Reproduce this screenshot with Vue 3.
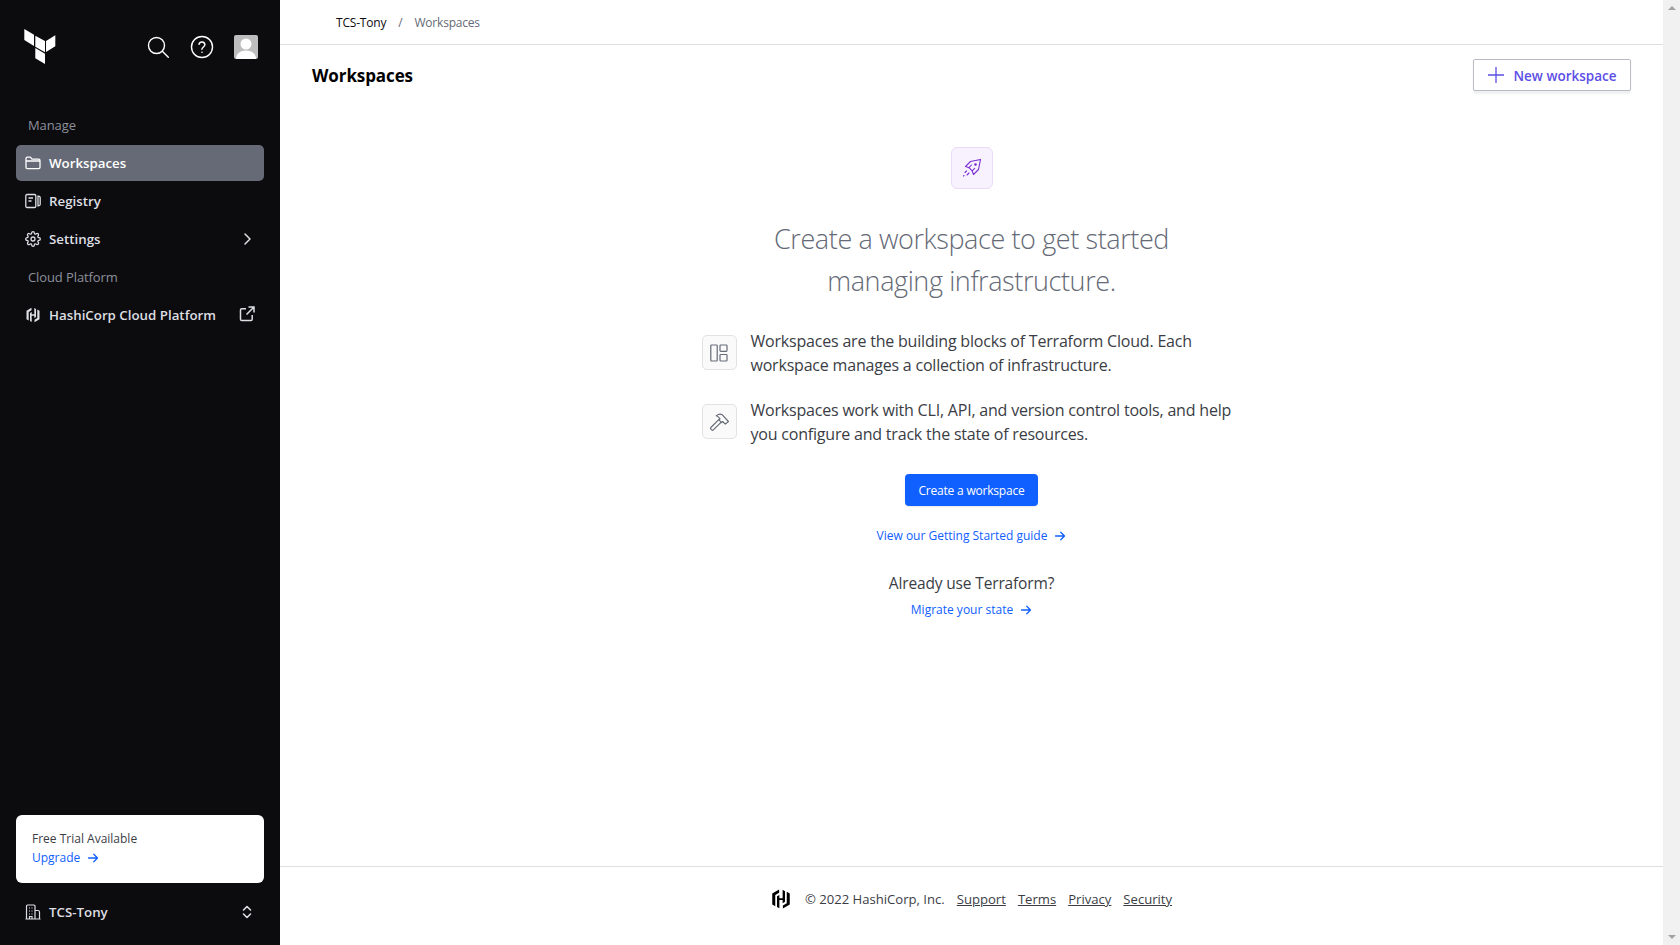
<template>
  <div class="app">
    <aside class="sidebar">
      <div class="side-top">
        <svg class="logo" viewBox="0 0 32 36" width="32" height="36">
          <polygon points="0.3,1 10,6.7 10,18 0.3,12" fill="#fff" />
          <polygon points="11.3,7.7 21,13 21,24.3 11.3,18.7" fill="#fff" />
          <polygon points="22,13 31.3,7.3 31.3,18.3 22,24" fill="#fff" />
          <polygon points="11.3,20 21,25.7 21,36 11.3,30.3" fill="#fff" />
        </svg>
        <div class="top-actions">
          <svg viewBox="0 0 24 24" width="24" height="24" fill="none" stroke="#fff" stroke-width="1.4">
            <circle cx="10.5" cy="10.5" r="8" />
            <path d="M16.3 16.3l6 6" stroke-linecap="round" />
          </svg>
          <svg viewBox="0 0 24 24" width="24" height="24" fill="none" stroke="#fff" stroke-width="1.4">
            <circle cx="12" cy="12" r="10.5" />
            <path d="M9 9.2a3 3 0 0 1 5.9.6c0 2-3 2.4-3 4.4" stroke-linecap="round" />
            <circle cx="12" cy="17.3" r=".8" fill="#fff" stroke="none" />
          </svg>
          <div class="avatar">
            <svg viewBox="0 0 24 24" width="24" height="24">
              <circle cx="12" cy="9" r="5.500" fill="#fff" />
              <path d="M2 24c0-5 4-8.500 10-8.500s10 3.500 10 8.500z" fill="#fff" />
            </svg>
          </div>
        </div>
      </div>

      <nav class="nav">
        <div class="nav-label">Manage</div>
        <a class="nav-item active">
          <svg viewBox="0 0 16 16" width="16" height="16" fill="none" stroke="currentColor" stroke-width="1.3">
            <path d="M1 3.6c0-.9.6-1.4 1.4-1.4h3l1.6 1.9h6.6c.8 0 1.4.6 1.4 1.4v6.700c0 .8-.6 1.400-1.400 1.400H2.400c-.8 0-1.400-.6-1.400-1.400zM1 6h14" stroke-linejoin="round" />
          </svg>
          <span>Workspaces</span>
        </a>
        <a class="nav-item">
          <svg viewBox="0 0 16 16" width="16" height="16" fill="none" stroke="currentColor" stroke-width="1.3">
            <rect x=".8" y="1.500" width="10" height="13" rx="1.200" />
            <path d="M3.500 5h4.500M3.500 8h3M13 3.200h.5c.8 0 1.700.6 1.700 1.500v6.600c0 .9-.9 1.500-1.700 1.500H13z" />
          </svg>
          <span>Registry</span>
        </a>
        <a class="nav-item">
          <svg viewBox="0 0 24 24" width="16" height="16" fill="none" stroke="currentColor" stroke-width="1.900">
            <circle cx="12" cy="12" r="3" />
            <path d="M19.4 15a1.65 1.65 0 0 0 .33 1.82l.06.06a2 2 0 0 1 0 2.83 2 2 0 0 1-2.83 0l-.06-.06a1.65 1.65 0 0 0-1.82-.33 1.65 1.65 0 0 0-1 1.51V21a2 2 0 0 1-2 2 2 2 0 0 1-2-2v-.09A1.65 1.65 0 0 0 9 19.4a1.65 1.65 0 0 0-1.82.33l-.06.06a2 2 0 0 1-2.83 0 2 2 0 0 1 0-2.83l.06-.06a1.65 1.65 0 0 0 .33-1.82 1.65 1.65 0 0 0-1.51-1H3a2 2 0 0 1-2-2 2 2 0 0 1 2-2h.09A1.65 1.65 0 0 0 4.6 9a1.65 1.65 0 0 0-.33-1.82l-.06-.06a2 2 0 0 1 0-2.83 2 2 0 0 1 2.83 0l.06.06a1.65 1.65 0 0 0 1.82.33H9a1.65 1.65 0 0 0 1-1.51V3a2 2 0 0 1 2-2 2 2 0 0 1 2 2v.09a1.65 1.65 0 0 0 1 1.51 1.65 1.65 0 0 0 1.82-.33l.06-.06a2 2 0 0 1 2.83 0 2 2 0 0 1 0 2.83l-.06.06a1.65 1.65 0 0 0-.33 1.82V9a1.65 1.65 0 0 0 1.51 1H21a2 2 0 0 1 2 2 2 2 0 0 1-2 2h-.09a1.65 1.65 0 0 0-1.51 1z" />
          </svg>
          <span>Settings</span>
          <svg class="item-end" viewBox="0 0 16 16" width="16" height="16" fill="none" stroke="currentColor" stroke-width="1.500">
            <path d="M6 3l5 5-5 5" stroke-linecap="round" stroke-linejoin="round" />
          </svg>
        </a>
        <div class="nav-label">Cloud Platform</div>
        <a class="nav-item">
          <svg viewBox="0 0 16 16" width="16" height="16" fill="currentColor">
            <path d="M6.500.8L1.500 3.700v8.600l2.200 1.300V4.900l2.800-1.600z" />
            <path d="M9.500 15.200l5-2.900V3.700l-2.200-1.300v8.700l-2.800 1.600z" />
            <path d="M5 6l1.700-1V7.200h2.600V1l1.700 1v8l-1.700 1V8.800H6.700V15L5 14z" />
          </svg>
          <span>HashiCorp Cloud Platform</span>
          <svg class="item-end ext" viewBox="0 0 16 16" width="16" height="16" fill="none" stroke="currentColor" stroke-width="1.500">
            <path d="M7 2.800H2.800c-.8 0-1.300.5-1.300 1.300v9.100c0 .8.500 1.300 1.300 1.300h9.100c.8 0 1.300-.5 1.300-1.300V9M9.500 1H15v5.500M15 1L7.500 8.500" />
          </svg>
        </a>
      </nav>

      <div class="trial">
        <div class="trial-title">Free Trial Available</div>
        <a class="link trial-link">Upgrade
          <svg viewBox="0 0 16 16" width="12" height="12" fill="none" stroke="currentColor" stroke-width="1.700"><path d="M2 8h12M9 3l5 5-5 5" stroke-linecap="round" stroke-linejoin="round" /></svg>
        </a>
      </div>

      <div class="org">
        <svg viewBox="0 0 16 16" width="16" height="16" fill="none" stroke="currentColor" stroke-width="1.200">
          <path d="M1.500 15V2c0-.6.400-1 1-1h6.500c.6 0 1 .4 1 1v13zM10 6.500h3c1 0 1.500.6 1.500 1.500v7H10M.5 15h15" />
          <path d="M4 4h1M6.500 4h1M4 7h1M6.500 7h1M4 10h1M6.500 10h1M4.500 15v-2.500h2.500V15" />
        </svg>
        <span>TCS-Tony</span>
        <svg class="item-end" viewBox="0 0 16 16" width="16" height="16" fill="none" stroke="currentColor" stroke-width="1.600">
          <path d="M4.500 6L8 2.500 11.500 6M4.500 10L8 13.500 11.500 10" stroke-linecap="round" stroke-linejoin="round" />
        </svg>
      </div>
    </aside>

    <main class="main">
      <div class="crumbs">
        <span class="crumb-org">TCS-Tony</span>
        <span class="crumb-sep">/</span>
        <span class="crumb-page">Workspaces</span>
      </div>

      <div class="title-row">
        <h1>Workspaces</h1>
        <button class="btn-new">
          <svg viewBox="0 0 16 16" width="16" height="16" fill="none" stroke="currentColor" stroke-width="1.300"><path d="M8 0v16M0 8h16" /></svg>
          <span class="btn-new-text">New workspace</span>
        </button>
      </div>

      <section class="empty">
        <div class="rocket-box">
          <svg viewBox="0 0 20 20" width="20" height="20" fill="none" stroke="#7b2fd0" stroke-width="1.100" stroke-linejoin="round" stroke-linecap="round">
            <path d="M18.500 1.500L8.500 3.500 3.500 8.500l3.500 1.200 3.200 3.200 1.300 3.600 5-5z" />
            <path d="M7 9.700L9.500 7M10.200 12.900l2.500-2.500" />
            <circle cx="13.500" cy="6.500" r=".8" fill="#7b2fd0" />
            <path d="M4.500 13l-1.500 1.500M7 15l-2 2M2 17.500l-.5.500" />
          </svg>
        </div>
        <h2>Create a workspace to get started<br />managing infrastructure.</h2>

        <div class="features">
          <div v-for="f in features" :key="f.kind" class="feature">
            <div class="feature-icon">
              <svg v-if="f.kind === 'blocks'" viewBox="0 0 18 18" width="18" height="18" fill="none" stroke="#656a76" stroke-width="1.200">
                <rect x=".8" y="1" width="6.400" height="16" rx=".8" />
                <rect x="10" y="1" width="7" height="6.400" rx=".8" />
                <rect x="10" y="10.500" width="7" height="6.500" rx=".8" />
              </svg>
              <svg v-else viewBox="0 0 20 20" width="21" height="21" fill="none" stroke="#656a76" stroke-width="1.100" stroke-linejoin="round">
                <path d="M7 4.500c2-1.500 4-1.800 5.500-1l6 6.500-3 2.500-2.500-2.500-1 1-2.500-2.500 1-1C9.500 6 8.500 5 7 4.500z" />
                <path d="M9.500 8L1.800 15.700c-.5.500-.5 1 0 1.500l.8.800c.5.500 1 .5 1.500 0L11.900 10.400" />
              </svg>
            </div>
            <p>{{ f.text }}<br />{{ f.text2 }}</p>
          </div>
        </div>

        <button class="btn-create">Create a workspace</button>
        <a class="link guide">View our Getting Started guide
          <svg viewBox="0 0 16 16" width="12" height="12" fill="none" stroke="currentColor" stroke-width="1.700"><path d="M2 8h12M9 3l5 5-5 5" stroke-linecap="round" stroke-linejoin="round" /></svg>
        </a>
        <div class="already">Already use Terraform?</div>
        <a class="link">Migrate your state
          <svg viewBox="0 0 16 16" width="12" height="12" fill="none" stroke="currentColor" stroke-width="1.700"><path d="M2 8h12M9 3l5 5-5 5" stroke-linecap="round" stroke-linejoin="round" /></svg>
        </a>
      </section>

      <footer class="footer">
        <svg class="foot-logo" viewBox="0 0 16 16" width="20" height="20" fill="#000">
          <path d="M6.500.4L1 3.600v8.800l2.400 1.400V4.700l3.100-1.800z" />
          <path d="M9.500 15.600l5.500-3.200V3.600l-2.400-1.400v9.100l-3.100 1.800z" />
          <path d="M4.800 5.800l1.900-1.100v2.600h2.600V.6l1.900 1.100v8.500l-1.900 1.100V8.700H6.700v6.700l-1.900-1.100z" />
        </svg>
        <span class="copy">© 2022 HashiCorp, Inc.</span>
        <a v-for="l in footerLinks" :key="l">{{ l }}</a>
      </footer>
    </main>

    <div class="scrollbar">
      <i class="arrow up"></i>
      <i class="arrow down"></i>
    </div>
  </div>
</template>

<script setup>
const features = [
  {
    kind: 'blocks',
    text: 'Workspaces are the building blocks of Terraform Cloud. Each',
    text2: 'workspace manages a collection of infrastructure.'
  },
  {
    kind: 'tools',
    text: 'Workspaces work with CLI, API, and version control tools, and help',
    text2: 'you configure and track the state of resources.'
  }
]

const footerLinks = ['Support', 'Terms', 'Privacy', 'Security']
</script>

<style>
html,
body {
  margin: 0;
  background: #fff;
  overflow: hidden;
}
</style>

<style scoped>
.app {
  display: flex;
  height: 945px;
  font-family: "Open Sans", "Noto Sans", sans-serif;
  color: #3b3d45;
}

.sidebar {
  width: 280px;
  flex: none;
  background: #0c0c0e;
  display: flex;
  flex-direction: column;
  box-sizing: border-box;
  padding: 0 16px;
  color: #dedfe3;
}

.side-top {
  height: 107px;
  flex: none;
  box-sizing: border-box;
  padding: 28px 6px 0 8px;
  display: flex;
  justify-content: space-between;
  align-items: flex-start;
}

.top-actions {
  display: flex;
  align-items: center;
  gap: 20px;
  margin-top: 7px;
}

.avatar {
  width: 24px;
  height: 24px;
  background: #bdbdbd;
  border-radius: 2px;
  overflow: hidden;
}

.avatar svg {
  display: block;
}

.nav {
  display: flex;
  flex-direction: column;
  gap: 2px;
}

.nav-label {
  height: 36px;
  line-height: 36px;
  padding-left: 12px;
  font-size: 13px;
  letter-spacing: -0.1px;
  color: #8c909c;
}

.nav-item {
  height: 36px;
  display: flex;
  align-items: center;
  gap: 8px;
  padding: 0 9px;
  border-radius: 5px;
  font-size: 13.3px;
  font-weight: 600;
  white-space: nowrap;
}

.nav-item span {
  margin-top: -1px;
}

.nav-item.active {
  background: #656a76;
  color: #fff;
}

.item-end {
  margin-left: auto;
}

.ext {
  margin-top: -2px;
}

.trial {
  margin-top: auto;
  height: 68px;
  box-sizing: border-box;
  padding: 14px 16px;
  background: #fff;
  border-radius: 6px;
  color: #3b3d45;
  font-size: 12px;
  line-height: 20px;
}

.trial-title {
  height: 19px;
}

.link {
  display: inline-flex;
  align-items: center;
  gap: 7px;
  color: #1060ff;
  font-size: 12px;
}

.org {
  height: 58px;
  flex: none;
  margin-bottom: 4px;
  display: flex;
  align-items: center;
  gap: 8px;
  padding: 0 9px;
  font-size: 13.3px;
  font-weight: 600;
  box-sizing: border-box;
}

.main {
  flex: 1;
  min-width: 0;
  display: flex;
  flex-direction: column;
}

.crumbs {
  height: 44px;
  flex: none;
  display: flex;
  align-items: center;
  padding-left: 56px;
  border-bottom: 1px solid #dedfe3;
  font-size: 12px;
  letter-spacing: -0.2px;
}

.crumb-org {
  color: #0c0c0e;
}

.crumb-sep {
  margin: 0 12px;
  color: #656a76;
}

.crumb-page {
  color: #656a76;
}

.title-row {
  flex: none;
  display: flex;
  justify-content: space-between;
  align-items: center;
  padding: 14px 32px 0;
}

h1 {
  margin: 0;
  font-size: 17px;
  font-weight: 700;
  letter-spacing: -0.1px;
  color: #000;
}

.btn-new {
  width: 158px;
  height: 32px;
  box-sizing: border-box;
  display: flex;
  align-items: center;
  justify-content: center;
  gap: 10px;
  background: #fff;
  border: 1px solid #b9bcc6;
  border-radius: 2px;
  box-shadow: 0 3px 2px rgba(101, 106, 118, 0.1);
  color: #5c4ee5;
  font: 600 13.5px "Open Sans", "Noto Sans", sans-serif;
  white-space: nowrap;
}

.btn-new-text {
  margin-top: 2px;
}

.empty {
  flex: 1;
  display: flex;
  flex-direction: column;
  align-items: center;
  padding-top: 56px;
}

.rocket-box {
  width: 42px;
  height: 42px;
  box-sizing: border-box;
  display: flex;
  align-items: center;
  justify-content: center;
  background: #f8f2ff;
  border: 1px solid #ebdbfc;
  border-radius: 6px;
}

h2 {
  margin: 29px 0 0;
  font-size: 27px;
  font-weight: 300;
  letter-spacing: -0.4px;
  line-height: 42px;
  text-align: center;
  color: #656a76;
}

.features {
  width: 540px;
  margin-top: 27px;
  display: flex;
  flex-direction: column;
  gap: 21px;
}

.feature {
  display: flex;
  gap: 14px;
}

.feature-icon {
  width: 35px;
  height: 35px;
  flex: none;
  box-sizing: border-box;
  margin-top: 6px;
  display: flex;
  align-items: center;
  justify-content: center;
  background: #fafafa;
  border: 1px solid #e1e2e6;
  border-radius: 5px;
}

.feature p {
  margin: 0;
  font-size: 16px;
  letter-spacing: -0.2px;
  line-height: 24px;
  color: #3b3d45;
  white-space: nowrap;
}

.btn-create {
  margin-top: 28px;
  width: 133px;
  height: 32px;
  border: none;
  border-radius: 4px;
  background: #1060ff;
  color: #fff;
  font: 400 12px "Open Sans", "Noto Sans", sans-serif;
  letter-spacing: -0.2px;
  box-shadow: 0 1px 2px rgba(101, 106, 118, 0.15);
  white-space: nowrap;
  padding: 0;
}

.guide {
  margin-top: 21px;
}

.already {
  margin-top: 27px;
  margin-bottom: 6px;
  font-size: 15.5px;
  letter-spacing: -0.15px;
  line-height: 24px;
}

.footer {
  height: 79px;
  flex: none;
  box-sizing: border-box;
  border-top: 1px solid #dedfe3;
  display: flex;
  justify-content: center;
  align-items: flex-start;
  gap: 12px;
  padding-top: 22px;
  font-size: 13.1px;
  line-height: 20px;
  color: #3b3d45;
}

.footer a {
  text-decoration: underline;
}

.copy {
  margin-left: 2px;
}

.scrollbar {
  width: 17px;
  flex: none;
  background: #f1f1f1;
  display: flex;
  flex-direction: column;
  justify-content: space-between;
  align-items: center;
  padding: 6px 0;
  box-sizing: border-box;
}

.arrow {
  width: 0;
  height: 0;
  border-left: 4px solid transparent;
  border-right: 4px solid transparent;
}

.arrow.up {
  border-bottom: 4px solid #a3a3a3;
}

.arrow.down {
  border-top: 4px solid #a3a3a3;
}
</style>
